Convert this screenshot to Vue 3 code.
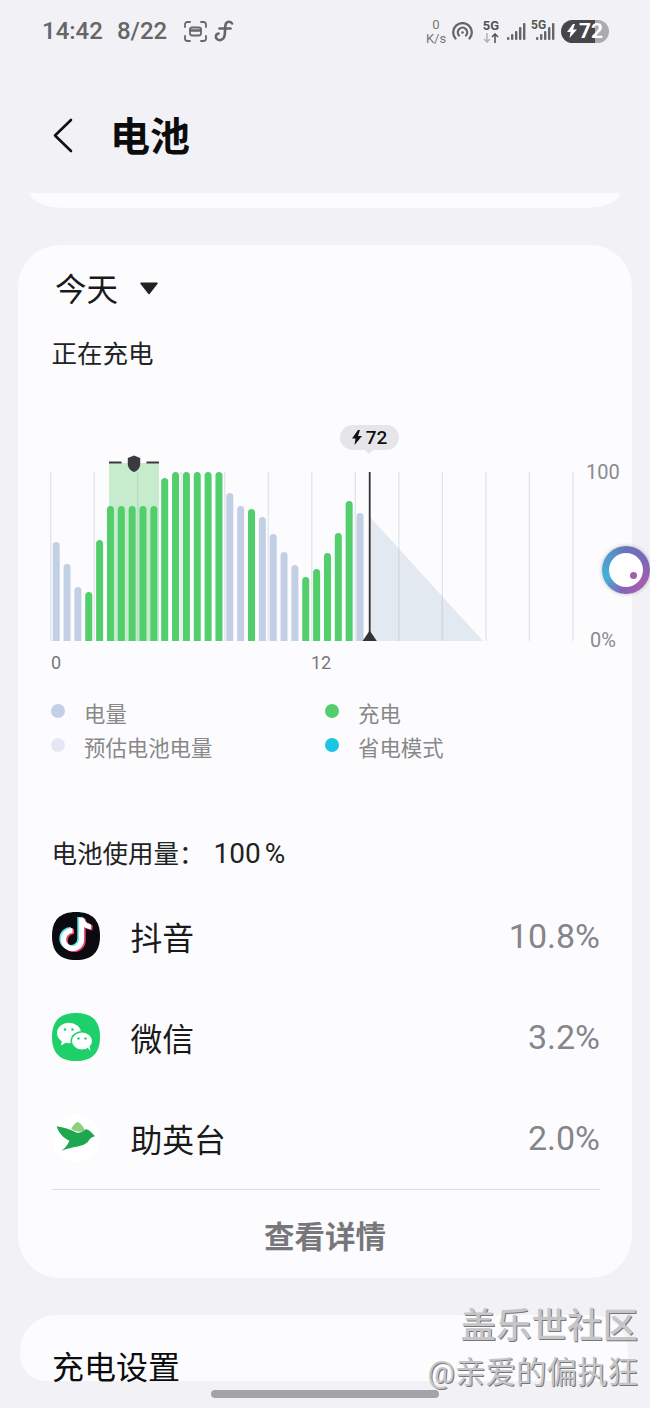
<script setup>
const gridXs = Array.from({ length: 13 }, (_, i) => 50.7 + i * 43.52)
const B = '#c2cfe5'
const G = '#52cf6b'
const heights = [
  [99, B], [77, B], [54, B], [49, G], [101, G], [135, G], [135, G], [135, G], [135, G], [135, G],
  [163, G], [169, G], [169, G], [169, G], [169, G], [169, G], [148, B], [135, B], [132, G], [124, B],
  [107, B], [89, B], [76, B], [64, G], [72, G], [88, G], [108, G], [140, G], [128, B]
]
const bars = heights.map(([h, color], i) => ({ x: 52.7 + i * 10.85, y: 641 - h, h, color }))
const legend = [
  { label: '电量', color: '#c3cfe6' },
  { label: '充电', color: '#52cf6b' },
  { label: '预估电池电量', color: '#e3e8f2' },
  { label: '省电模式', color: '#1cc6e3' }
]
const apps = [
  { id: 'tiktok', name: '抖音', pct: '10.8%' },
  { id: 'wechat', name: '微信', pct: '3.2%' },
  { id: 'bird', name: '助英台', pct: '2.0%' }
]
</script>

<template>
  <div class="page">
    <div class="status">
      <div class="status-left">
        <span class="clock">14:42</span>
        <span class="clock date">8/22</span>
        <svg class="ic-shot" width="23" height="21" viewBox="0 0 23 21" fill="none" stroke="#666" stroke-width="1.8" stroke-linecap="round">
          <path d="M1 6V3.500A2.500 2.500 0 0 1 3.500 1H6M17 1h2.500A2.500 2.500 0 0 1 22 3.500V6M22 15v2.500a2.500 2.500 0 0 1-2.500 2.500H17M6 20H3.500A2.500 2.500 0 0 1 1 17.500V15" />
          <rect x="6" y="6.500" width="11" height="8" rx="2.200" />
          <path d="M6.500 9.500h10" stroke-width="2.400" />
        </svg>
        <svg class="ic-f" width="20" height="22" viewBox="0 0 20 22" fill="none" stroke="#666" stroke-width="2.600" stroke-linecap="round">
          <path d="M18 3.500C17 1.500 13.500 1 12 3.500 10.500 6 11.500 12 10.500 16 9.800 19.500 6 21 3.500 19.500 1 18 1.500 14 4.500 13.500" />
          <path d="M5.500 8.500H16.500" />
        </svg>
      </div>
      <div class="status-right">
        <div class="speed"><span>0</span><span>K/s</span></div>
        <svg class="ic-hot" width="21" height="18" viewBox="0 0 21 18" fill="none" stroke="#666" stroke-width="2.300" stroke-linecap="round">
          <path d="M3.500 16.500A9.300 9.300 0 1 1 17.500 16.500" />
          <path d="M7 13.500A4.700 4.700 0 1 1 14 13.500" />
          <circle cx="10.500" cy="10.500" r="1.300" fill="#666" stroke="none" />
        </svg>
        <div class="net">
          <span class="five">5G</span>
          <svg width="16" height="10" viewBox="0 0 16 10" fill="none" stroke-width="1.600">
            <path d="M4 0v9M1 6l3 3 3-3" stroke="#b5b5b8" />
            <path d="M12 10V1M9 4l3-3 3 3" stroke="#555" />
          </svg>
        </div>
        <svg class="ic-sig" width="19" height="17" viewBox="0 0 19 17" fill="#666">
          <rect x="0" y="14" width="2.400" height="3" rx="1" />
          <rect x="4" y="11" width="2.400" height="6" rx="1" />
          <rect x="8" y="8" width="2.400" height="9" rx="1" />
          <rect x="12" y="4" width="2.400" height="13" rx="1" />
          <rect x="16" y="0" width="2.400" height="17" rx="1" />
        </svg>
        <div class="sig2">
          <span class="five small">5G</span>
          <svg width="19" height="17" viewBox="0 0 19 17" fill="#666">
            <rect x="0" y="14" width="2.400" height="3" rx="1" />
            <rect x="4" y="11" width="2.400" height="6" rx="1" />
            <rect x="8" y="8" width="2.400" height="9" rx="1" />
            <rect x="12" y="4" width="2.400" height="13" rx="1" />
            <rect x="16" y="0" width="2.400" height="17" rx="1" />
          </svg>
        </div>
        <div class="battery">
          <svg width="10" height="14" viewBox="0 0 10 14" fill="#fff"><path d="M6 0 0 8h3.500L2.500 14 10 5.500H6L8 0z" /></svg>
          <span>72</span>
        </div>
      </div>
    </div>

    <header class="head">
      <svg class="back" width="20" height="35" viewBox="0 0 20 35" fill="none" stroke="#111" stroke-width="2.600" stroke-linecap="round" stroke-linejoin="round">
        <path d="M18 2 2 17.500 18 33" />
      </svg>
      <h1>电池</h1>
    </header>

    <div class="stub"></div>

    <section class="card">
      <div class="period">
        <span>今天</span>
        <svg width="18" height="13" viewBox="0 0 18 13" fill="#222"><path d="M1 .5h16a.8.8 0 0 1 .6 1.300L9.600 12a.8.8 0 0 1-1.200 0L.4 1.800A.8.8 0 0 1 1 .5z" /></svg>
      </div>
      <div class="state">正在充电</div>

      <div class="chart">
        <svg width="614" height="260" viewBox="18 420 614 260">
          <rect x="109" y="463" width="50" height="178" fill="#c6eccd" />
          <path d="M370 517 483 641H370z" fill="#e3e9f1" />
          <line v-for="x in gridXs" :key="x" :x1="x" :x2="x" y1="472" y2="641" stroke="#8f939c" stroke-opacity=".22" stroke-width="1.300" />
          <rect v-for="(b, i) in bars" :key="i" :x="b.x" :y="b.y" width="7" :height="b.h + 3" rx="3.500" :fill="b.color" />
          <rect x="18" y="641" width="614" height="5" fill="#fcfcff" />
          <path d="M109 461.500h12.500v2H109zM146.500 461.500H159v2h-12.500z" fill="#3a3a3f" />
          <path d="M134 455.500l6.200 2.500v6c0 4-3 7-6.200 8-3.200-1-6.200-4-6.200-8v-6z" fill="#3a3a3f" />
          <line x1="369.700" x2="369.700" y1="472" y2="640" stroke="#333" stroke-width="1.800" />
          <path d="M369.700 630.500 376.800 641H362.600z" fill="#333" />
          <text class="axis" x="51" y="669">0</text>
          <text class="axis" x="311" y="669">12</text>
          <text class="axis big" x="586" y="479">100</text>
          <text class="axis big" x="590" y="647">0%</text>
        </svg>
        <div class="tip">
          <svg width="10" height="15" viewBox="0 0 10 15" fill="#111"><path d="M6 0 0 8.500h3.500L2.500 15 10 6H6L8 0z" /></svg>
          <span>72</span>
        </div>
      </div>

      <ul class="legend">
        <li v-for="l in legend" :key="l.label">
          <i class="dot" :style="{ background: l.color }"></i>
          <span>{{ l.label }}</span>
        </li>
      </ul>

      <div class="usage">电池使用量：<b class="usage-num">100<em>%</em></b></div>

      <div class="apps">
        <div v-for="a in apps" :key="a.id" class="app">
          <svg v-if="a.id === 'tiktok'" class="app-ic" width="48" height="48" viewBox="0 0 48 48">
            <path d="M24 0C40 0 48 8 48 24S40 48 24 48 0 40 0 24 8 0 24 0z" fill="#0a0a10" />
            <g fill="none" stroke-width="5.200">
              <path d="M29.500 6V27.500a9 9 0 1 1-9-9M29.500 6c.5 5 4.500 8.500 9.500 9" stroke="#5fe6e6" transform="translate(-1.600 -1)" />
              <path d="M29.500 6V27.500a9 9 0 1 1-9-9M29.500 6c.5 5 4.500 8.500 9.500 9" stroke="#f0416c" transform="translate(1.600 1)" />
              <path d="M29.500 6V27.500a9 9 0 1 1-9-9M29.500 6c.5 5 4.500 8.500 9.500 9" stroke="#fff" />
            </g>
          </svg>
          <svg v-else-if="a.id === 'wechat'" class="app-ic" width="48" height="48" viewBox="0 0 48 48">
            <path d="M24 0C40 0 48 8 48 24S40 48 24 48 0 40 0 24 8 0 24 0z" fill="#1dd06a" />
            <ellipse cx="17" cy="20" rx="12" ry="10.300" fill="#fff" />
            <path d="M10 27l-1 5.500 6-3.500z" fill="#fff" />
            <ellipse cx="30" cy="28" rx="11.500" ry="10" fill="#1dd06a" />
            <ellipse cx="30" cy="28" rx="10" ry="8.600" fill="#fff" />
            <path d="M35 34l3.500 4-1-5.500z" fill="#fff" />
            <circle cx="13" cy="16.500" r="1.300" fill="#1dd06a" />
            <circle cx="20.500" cy="16.500" r="1.300" fill="#1dd06a" />
            <circle cx="26.500" cy="25.500" r="1.200" fill="#1dd06a" />
            <circle cx="33.500" cy="25.500" r="1.200" fill="#1dd06a" />
          </svg>
          <svg v-else class="app-ic" width="48" height="48" viewBox="66 645 144 144">
            <circle cx="138" cy="717" r="72" fill="#fff" />
            <path d="M124 690C128 678 136 672 143 668 154 674 162 684 165 696 150 700 134 698 124 690z" fill="#8fd07d" />
            <path d="M80 682C100 685 122 692 137 700 146 704 158 700 167 691 176 690 183 699 195 712 184 714 179 720 174 728 158 745 128 741 95 755 108 745 114 735 118 725 100 718 86 702 80 682z" fill="#1fa750" />
          </svg>
          <span class="app-name">{{ a.name }}</span>
          <span class="app-pct">{{ a.pct }}</span>
        </div>
      </div>

      <div class="detail"><span>查看详情</span></div>
    </section>

    <section class="charge"><span>充电设置</span></section>

    <div class="ball"><i></i></div>
    <div class="mark">
      <div class="mark-a">盖乐世社区</div>
      <div class="mark-b">@亲爱的偏执狂</div>
    </div>
    <div class="home"></div>
  </div>
</template>

<style>
html, body { margin: 0; padding: 0; background: #f2f2f6; }
</style>

<style scoped>
.page {
  position: relative;
  width: 650px;
  height: 1408px;
  overflow: hidden;
  background: #f2f2f6;
  font-family: Roboto, "Noto Sans CJK SC", sans-serif;
  color: #111;
}
.status {
  display: flex;
  justify-content: space-between;
  align-items: center;
  height: 62px;
  padding: 0 41px 0 42px;
  box-sizing: border-box;
}
.status-left { display: flex; align-items: center; }
.clock { font-size: 24px; font-weight: 500; color: #666; line-height: 28px; }
.date { margin-left: 14px; }
.ic-shot { margin-left: 17px; }
.ic-f { margin-left: 7px; }
.status-right { display: flex; align-items: center; height: 30px; }
.speed {
  display: flex;
  flex-direction: column;
  align-items: center;
  width: 20px;
  margin-top: 2px;
  font-size: 13px;
  line-height: 14px;
  color: #777;
}
.ic-hot { margin-left: 6px; }
.net { display: flex; flex-direction: column; align-items: center; margin-left: 10px; width: 16px; }
.five { font-size: 13px; font-weight: 700; line-height: 14px; color: #555; }
.small { font-size: 12px; }
.ic-sig { margin-left: 8px; }
.sig2 { position: relative; margin-left: 5px; width: 24px; height: 17px; display: flex; justify-content: flex-end; }
.sig2 .five { position: absolute; left: 0; top: -5px; }
.battery {
  display: flex;
  align-items: center;
  justify-content: center;
  gap: 2px;
  margin-left: 6px;
  width: 48px;
  height: 23px;
  border-radius: 12px;
  background: linear-gradient(90deg, #474749 0 34px, #ababad 34px);
  font-size: 21px;
  font-weight: 700;
  color: #fff;
}
.head { display: flex; align-items: center; height: 131px; padding: 36px 0 20px 53px; box-sizing: border-box; }
.head h1 { margin: 5px 0 0 37px; font-size: 40px; font-weight: 700; line-height: 50px; color: #0c0c0c; }
.stub {
  height: 15px;
  margin: 0 30px;
  background: #fcfcff;
  border-radius: 0 0 34px 34px / 0 0 15px 15px;
}
.card {
  margin: 37px 18px 0;
  height: 1033px;
  padding-top: 26px;
  box-sizing: border-box;
  background: #fcfcff;
  border-radius: 42px;
  overflow: hidden;
}
.period { display: flex; align-items: center; height: 40px; padding-left: 37px; font-size: 31.500px; line-height: 40px; color: #1a1a1a; }
.period svg { margin: -6px 0 0 22px; }
.state { margin-top: 25px; padding-left: 33.500px; font-size: 25.500px; line-height: 36px; color: #222; }
.chart { position: relative; margin-top: 48px; height: 260px; }
.chart > svg { display: block; }
.axis { font-size: 18px; fill: #777; font-family: Roboto, sans-serif; }
.big { font-size: 20px; fill: #8a8a8e; }
.tip {
  position: absolute;
  left: 322px;
  top: 5px;
  width: 59px;
  height: 25px;
  border-radius: 13px;
  background: #e6e6ea;
  display: flex;
  align-items: center;
  justify-content: center;
  gap: 4px;
  font-size: 19px;
  font-weight: 500;
  color: #111;
}
.tip::after {
  content: "";
  position: absolute;
  left: 24px;
  bottom: -4px;
  border-left: 5px solid transparent;
  border-right: 5px solid transparent;
  border-top: 5px solid #e6e6ea;
}
.legend {
  list-style: none;
  margin: 15.500px 0 0;
  padding: 0 0 0 33px;
  display: grid;
  grid-template-columns: 274px 1fr;
}
.legend li { display: flex; align-items: center; height: 34px; font-size: 21.400px; color: #888; }
.dot { width: 14px; height: 14px; border-radius: 50%; margin-right: 19px; margin-top: -3px; }
.usage { margin-top: 72.500px; padding-left: 33.500px; font-size: 25.500px; line-height: 36px; color: #222; }
.usage-num { font-weight: 400; font-size: 28px; margin-left: 9px; }
.usage-num em { font-style: normal; margin-left: 4px; }
.apps { margin: 13px 32px 0 33.500px; border-bottom: 1.500px solid #dcdce0; }
.app { display: flex; align-items: center; height: 101.200px; }
.app-ic { flex: none; }
.app-name { margin: 6px 0 0 31px; font-size: 31.800px; line-height: 40px; color: #1a1a1a; }
.app-pct { margin-left: auto; font-size: 34px; color: #85858a; }
.detail { display: flex; justify-content: center; align-items: center; height: 88px; padding-top: 2px; box-sizing: border-box; font-size: 30.500px; font-weight: 700; color: #77777b; }
.charge {
  margin: 37px 22px 0 20px;
  height: 66px;
  padding: 35px 0 0 32px;
  box-sizing: border-box;
  background: #fcfcff;
  border-radius: 36px 36px 26px 26px;
  font-size: 32px;
  line-height: 36px;
  color: #0c0c0c;
}
.charge span { white-space: nowrap; }
.ball {
  position: absolute;
  left: 602px;
  top: 546px;
  width: 48px;
  height: 48px;
  border-radius: 50%;
  background: conic-gradient(#6a72bb 0deg, #7a68b8 60deg, #a55eb0 130deg, #8a62b5 190deg, #3fb2da 250deg, #5a90c8 320deg, #6a72bb 360deg);
  box-shadow: 0 0 4px rgba(0, 0, 0, .25);
}
.ball::before {
  content: "";
  position: absolute;
  inset: 7px;
  border-radius: 50%;
  background: #fff;
}
.ball i {
  position: absolute;
  left: 28px;
  top: 26px;
  width: 7px;
  height: 7px;
  border-radius: 50%;
  background: #a25fb0;
}
.mark {
  position: absolute;
  right: 12px;
  top: 1303px;
  text-align: right;
  color: #c6c6c8;
  text-shadow: 1px 1px 0 #77777a;
  white-space: nowrap;
}
.mark-a { font-size: 35.500px; line-height: 46px; font-weight: 500; }
.mark-b { margin-top: 4px; font-size: 30.500px; line-height: 40px; font-weight: 400; }
.home {
  position: absolute;
  left: 211px;
  top: 1390px;
  width: 228px;
  height: 8px;
  border-radius: 4px;
  background: #a3a3a8;
}
</style>
